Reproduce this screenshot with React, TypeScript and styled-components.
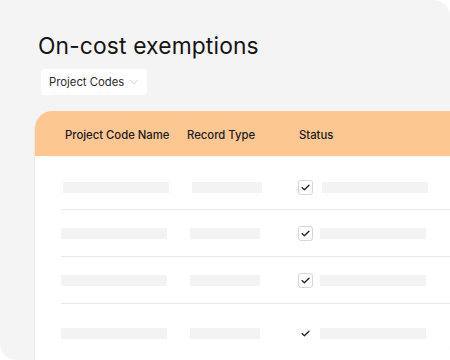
import React from "react";
import styled, { createGlobalStyle } from "styled-components";

const Global = createGlobalStyle`
  html, body { margin: 0; padding: 0; background: #ffffff; }
  body { font-family: "Inter", "Noto Sans", sans-serif; color: #151515; }
`;

const Card = styled.div`
  width: 450px;
  height: 360px;
  background: #f4f4f4;
  border-radius: 0 16px 16px 16px;
  overflow: hidden;
  box-sizing: border-box;
  padding: 31px 0 0 34px;
  display: flex;
  flex-direction: column;
`;

const Title = styled.h1`
  margin: 0 0 0 4px;
  font-size: 22.8px;
  font-weight: 400;
  line-height: 30px;
  letter-spacing: 0.15px;
  color: #141414;
`;

const Select = styled.div`
  margin: 8px 0 0 7px;
  align-self: flex-start;
  display: flex;
  align-items: center;
  gap: 5px;
  height: 26px;
  padding: 0 8px 0 8px;
  background: #ffffff;
  border-radius: 4px;
  font-size: 11.3px;
  color: #2a2a2a;
`;

const Table = styled.div`
  margin-top: 16px;
  flex: 1;
  background: #ffffff;
  border-top-left-radius: 18px;
  border-left: 1px solid #e9e9e9;
  overflow: hidden;
  display: flex;
  flex-direction: column;
`;

const Header = styled.div`
  height: 45px;
  box-sizing: border-box;
  padding-top: 3px;
  flex: none;
  background: #fdc792;
  display: grid;
  grid-template-columns: 122px 112px 1fr;
  align-items: center;
  padding-left: 31px;
  margin-left: -1px;
  font-size: 11.3px;
  font-weight: 500;
  color: #1a1a1a;
`;

const Row = styled.div<{ $h: number; $shift: number; $top: number }>`
  height: ${(p) => p.$h}px;
  box-sizing: border-box;
  margin-left: 26px;
  padding: ${(p) => p.$top}px 0 0 ${(p) => p.$shift}px;
  border-bottom: 1px solid #e7eaec;
  display: flex;
  align-items: center;
  flex: none;
`;

const Bar = styled.div<{ $w: number; $gap: number }>`
  width: ${(p) => p.$w}px;
  height: 11px;
  background: #f3f3f3;
  margin-right: ${(p) => p.$gap}px;
  flex: none;
`;

const Check = styled.div<{ $boxed: boolean; $gap: number }>`
  width: 15px;
  height: 15px;
  box-sizing: border-box;
  border: 1px solid ${(p) => (p.$boxed ? "#d6d6d6" : "transparent")};
  border-radius: 3px;
  background: #fff;
  display: flex;
  align-items: center;
  justify-content: center;
  margin-right: ${(p) => p.$gap}px;
  flex: none;
`;

const Tick = () => (
  <svg width="9" height="7" viewBox="0 0 9 7" fill="none">
    <path d="M1 3.6 L3.4 5.8 L8 1.2" stroke="#222" strokeWidth="1.3" strokeLinecap="round" strokeLinejoin="round" />
  </svg>
);

const Chevron = () => (
  <svg width="10" height="6" viewBox="0 0 10 6" fill="none">
    <path d="M1 1 L5 5 L9 1" stroke="#d4d4d4" strokeWidth="1" strokeLinecap="round" strokeLinejoin="round" />
  </svg>
);

const rows = [
  { h: 54, shift: 2, top: 9, boxed: true, g2: 36, g3: 9 },
  { h: 47, shift: 0, top: 0, boxed: true, g2: 38, g3: 7 },
  { h: 47, shift: 0, top: 0, boxed: true, g2: 38, g3: 7 },
  { h: 60, shift: 0, top: 0, boxed: false, g2: 38, g3: 7 },
];

export default function App() {
  return (
    <>
      <Global />
      <Card>
        <Title>On-cost exemptions</Title>
        <Select>
          Project Codes <Chevron />
        </Select>
        <Table>
          <Header>
            <span>Project Code Name</span>
            <span>Record Type</span>
            <span>Status</span>
          </Header>
          {rows.map((r, i) => (
            <Row key={i} $h={r.h} $shift={r.shift} $top={r.top}>
              <Bar $w={106} $gap={23} />
              <Bar $w={70} $gap={r.g2} />
              <Check $boxed={r.boxed} $gap={r.g3}>
                <Tick />
              </Check>
              <Bar $w={106} $gap={0} />
            </Row>
          ))}
        </Table>
      </Card>
    </>
  );
}
